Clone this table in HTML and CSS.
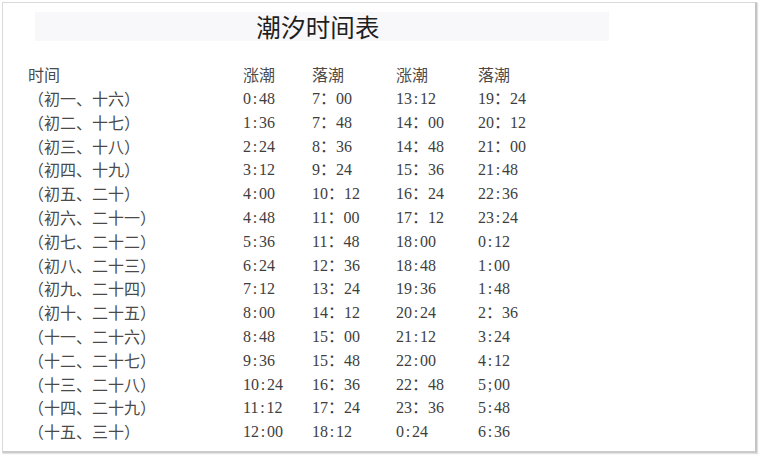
FILE: index.html
```html
<!DOCTYPE html>
<html lang="zh">
<head>
<meta charset="utf-8">
<title>潮汐时间表</title>
<link rel="stylesheet" href="styles.css">
</head>
<body>
<div class="frame">
  <div class="band"><h1 class="title">潮汐时间表</h1></div>
  <div class="table">
    <div class="row head"><span>时间</span><span>涨潮</span><span>落潮</span><span>涨潮</span><span>落潮</span></div>
    <div class="row"><span>（初一、十六）</span><span class="n">0<i>:</i>48</span><span class="n">7：00</span><span class="n">13<i>:</i>12</span><span class="n">19：24</span></div>
    <div class="row"><span>（初二、十七）</span><span class="n">1<i>:</i>36</span><span class="n">7：48</span><span class="n">14：00</span><span class="n">20：12</span></div>
    <div class="row"><span>（初三、十八）</span><span class="n">2<i>:</i>24</span><span class="n">8：36</span><span class="n">14：48</span><span class="n">21：00</span></div>
    <div class="row"><span>（初四、十九）</span><span class="n">3<i>:</i>12</span><span class="n">9：24</span><span class="n">15：36</span><span class="n">21<i>:</i>48</span></div>
    <div class="row"><span>（初五、二十）</span><span class="n">4<i>:</i>00</span><span class="n">10：12</span><span class="n">16：24</span><span class="n">22<i>:</i>36</span></div>
    <div class="row"><span>（初六、二十一）</span><span class="n">4<i>:</i>48</span><span class="n">11：00</span><span class="n">17：12</span><span class="n">23<i>:</i>24</span></div>
    <div class="row"><span>（初七、二十二）</span><span class="n">5<i>:</i>36</span><span class="n">11：48</span><span class="n">18<i>:</i>00</span><span class="n">0<i>:</i>12</span></div>
    <div class="row"><span>（初八、二十三）</span><span class="n">6<i>:</i>24</span><span class="n">12：36</span><span class="n">18<i>:</i>48</span><span class="n">1<i>:</i>00</span></div>
    <div class="row"><span>（初九、二十四）</span><span class="n">7<i>:</i>12</span><span class="n">13：24</span><span class="n">19<i>:</i>36</span><span class="n">1<i>:</i>48</span></div>
    <div class="row"><span>（初十、二十五）</span><span class="n">8<i>:</i>00</span><span class="n">14：12</span><span class="n">20<i>:</i>24</span><span class="n">2：36</span></div>
    <div class="row"><span>（十一、二十六）</span><span class="n">8<i>:</i>48</span><span class="n">15：00</span><span class="n">21<i>:</i>12</span><span class="n">3<i>:</i>24</span></div>
    <div class="row"><span>（十二、二十七）</span><span class="n">9<i>:</i>36</span><span class="n">15：48</span><span class="n">22<i>:</i>00</span><span class="n">4<i>:</i>12</span></div>
    <div class="row"><span>（十三、二十八）</span><span class="n">10<i>:</i>24</span><span class="n">16：36</span><span class="n">22：48</span><span class="n">5<i>;</i>00</span></div>
    <div class="row"><span>（十四、二十九）</span><span class="n">11<i>:</i>12</span><span class="n">17：24</span><span class="n">23：36</span><span class="n">5<i>:</i>48</span></div>
    <div class="row"><span>（十五、三十）</span><span class="n">12<i>:</i>00</span><span class="n">18<i>:</i>12</span><span class="n">0<i>:</i>24</span><span class="n">6<i>:</i>36</span></div>
  </div>
</div>
</body>
</html>
```
FILE: styles.css
```css
html, body {
  margin: 0;
  padding: 0;
  background: #ffffff;
}
body {
  width: 761px;
  height: 455px;
  overflow: hidden;
  font-family: "Noto Sans CJK SC", sans-serif;
}
.frame {
  box-sizing: border-box;
  margin: 2px 0 0 2px;
  width: 755px;
  height: 451px;
  border: 1px solid #d9d9d9;
  border-right: 2px solid #c4c4c4;
  border-bottom: 2px solid #cbcbcb;
  box-shadow: 1px 1px 1px #e2e2e2;
  background: #fff;
  padding-top: 9px;
}
.band {
  margin-left: 32px;
  width: 574px;
  height: 29px;
  background: #f8f8fa;
  display: flex;
  align-items: center;
  justify-content: center;
  padding-right: 8px;
  box-sizing: border-box;
}
.title {
  margin: 0;
  font-size: 24.5px;
  font-weight: normal;
  color: #1f1f1f;
  line-height: 29px;
  letter-spacing: 0.2px;
}
.table {
  margin-top: 22px;
  padding-left: 25px;
  color: #4a4a4a;
  font-size: 16px;
}
.row {
  display: grid;
  grid-template-columns: 215px 69px 84px 82px 1fr;
  height: 23.8px;
  line-height: 23.8px;
  white-space: nowrap;
}
.row.head {
  height: 24px;
}
.n {
  font-family: "Liberation Serif", "Noto Sans CJK SC", serif;
  font-size: 16px;
  color: #3e3e3e;
}
.n i {
  font-style: normal;
  display: inline-block;
  width: 8px;
  text-align: center;
}
```
